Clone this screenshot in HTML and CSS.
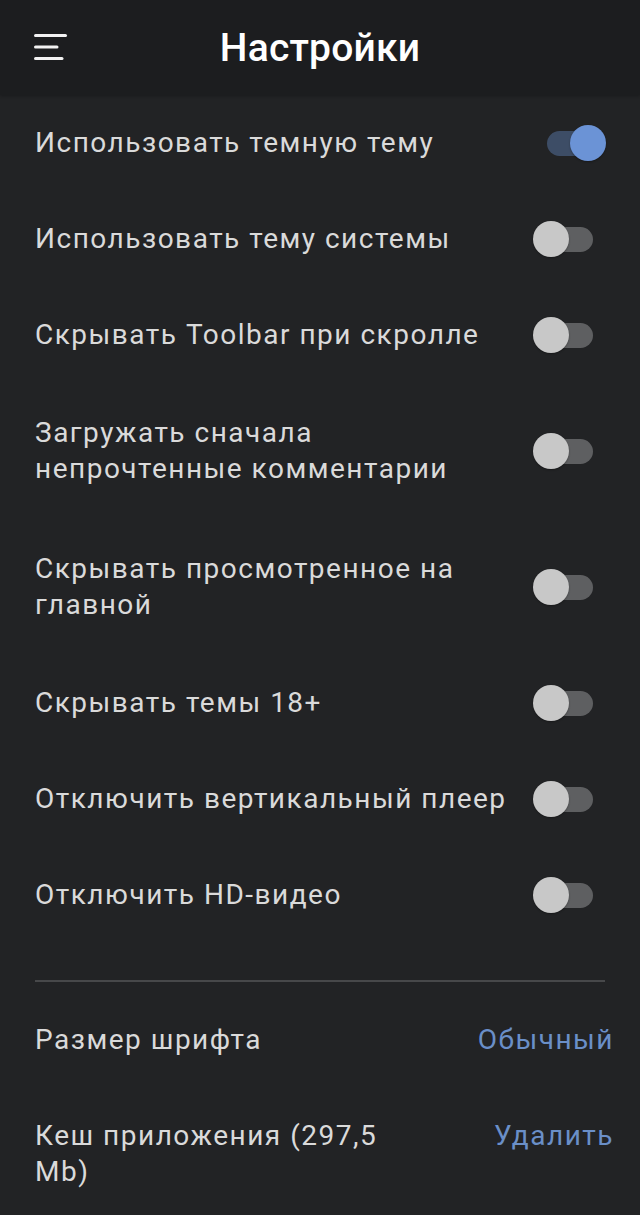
FILE: index.html
```html
<!DOCTYPE html>
<html lang="ru">
<head>
    <meta charset="UTF-8">
    <meta name="viewport" content="width=device-width, initial-scale=1.0">
    <title>Настройки</title>
    <link rel="stylesheet" href="styles.css">
</head>
<body>

    <!-- Toolbar -->
    <header class="toolbar">
        <button class="menu-btn" aria-label="Меню">
            <svg width="34" height="30" viewBox="0 0 34 30">
                <line x1="1.5" y1="3.5" x2="31.5" y2="3.5" />
                <line x1="1.5" y1="15" x2="23" y2="15" />
                <line x1="1.5" y1="26.5" x2="28" y2="26.5" />
            </svg>
        </button>
        <h1>Настройки</h1>
        <span></span>
    </header>

    <main class="settings">
        <!-- Switches -->
        <div class="setting-row">
            <span class="setting-label">Использовать темную тему</span>
            <span class="switch on"><span class="track"></span><span class="thumb"></span></span>
        </div>
        <div class="setting-row">
            <span class="setting-label">Использовать тему системы</span>
            <span class="switch"><span class="track"></span><span class="thumb"></span></span>
        </div>
        <div class="setting-row">
            <span class="setting-label">Скрывать Toolbar при скролле</span>
            <span class="switch"><span class="track"></span><span class="thumb"></span></span>
        </div>
        <div class="setting-row two-line">
            <span class="setting-label">Загружать сначала<br>непрочтенные комментарии</span>
            <span class="switch"><span class="track"></span><span class="thumb"></span></span>
        </div>
        <div class="setting-row two-line">
            <span class="setting-label">Скрывать просмотренное на<br>главной</span>
            <span class="switch"><span class="track"></span><span class="thumb"></span></span>
        </div>
        <div class="setting-row">
            <span class="setting-label">Скрывать темы 18+</span>
            <span class="switch"><span class="track"></span><span class="thumb"></span></span>
        </div>
        <div class="setting-row">
            <span class="setting-label">Отключить вертикальный плеер</span>
            <span class="switch"><span class="track"></span><span class="thumb"></span></span>
        </div>
        <div class="setting-row">
            <span class="setting-label">Отключить HD-видео</span>
            <span class="switch"><span class="track"></span><span class="thumb"></span></span>
        </div>

        <hr class="divider">

        <!-- Value settings -->
        <div class="value-row">
            <span class="setting-label">Размер шрифта</span>
            <a class="value-link" href="#">Обычный</a>
        </div>
        <div class="value-row">
            <span class="setting-label">Кеш приложения (297,5<br>Mb)</span>
            <a class="value-link" href="#">Удалить</a>
        </div>
    </main>

</body>
</html>
```

FILE: styles.css
```css
body {
    margin: 0;
    background-color: #222325;
    font-family: Roboto, "Noto Sans", sans-serif;
    color: #dadada;
}

.toolbar {
    height: 95px;
    display: grid;
    grid-template-columns: 1fr auto 1fr;
    align-items: center;
    background-color: #1c1d1f;
    box-shadow: 0 1px 3px rgba(0, 0, 0, 0.25);
    position: relative;
}

.menu-btn {
    justify-self: start;
    margin-left: 34px;
    margin-top: -1px;
    padding: 0;
    border: none;
    background: none;
    display: flex;
}

.menu-btn line {
    stroke: #f2f2f2;
    stroke-width: 3;
    stroke-linecap: round;
}

.toolbar h1 {
    margin: 0;
    font-size: 39px;
    font-weight: 500;
    color: #ffffff;
    letter-spacing: 0.2px;
}

.setting-row {
    display: flex;
    align-items: center;
    justify-content: space-between;
    padding: 30px 34px 30px 35px;
}

.setting-row.two-line {
    padding-top: 32px;
    padding-bottom: 32px;
}

.setting-label {
    font-size: 28px;
    line-height: 36px;
    letter-spacing: 1.5px;
    white-space: nowrap;
}

.switch {
    position: relative;
    flex: none;
    width: 73px;
    height: 36px;
}

.switch .track {
    position: absolute;
    left: 14px;
    top: 6px;
    width: 46px;
    height: 25px;
    border-radius: 13px;
    background-color: #5e5f61;
}

.switch .thumb {
    position: absolute;
    left: 0;
    top: 0;
    width: 36px;
    height: 36px;
    border-radius: 50%;
    background-color: #c8c8c8;
    box-shadow: 0 1px 2px rgba(0, 0, 0, 0.3);
}

.switch.on .track {
    background-color: #3d4d66;
}

.switch.on .thumb {
    left: auto;
    right: 0;
    background-color: #6b93d6;
}

.divider {
    margin: 37px 35px 10px 35px;
    border: none;
    height: 2px;
    background-color: #47484a;
}

.value-row {
    display: flex;
    align-items: flex-start;
    justify-content: space-between;
    padding: 30px 26px 30px 35px;
}

.value-link {
    font-size: 28px;
    line-height: 36px;
    letter-spacing: 1.5px;
    color: #6a8fc8;
    text-decoration: none;
}
```
